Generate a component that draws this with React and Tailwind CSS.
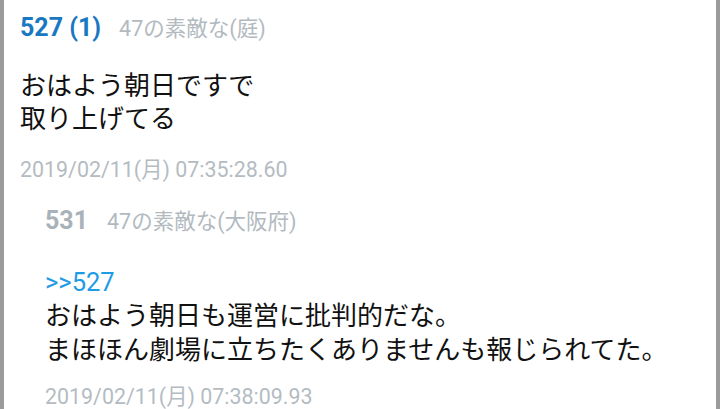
export default function App() {
  const font = { fontFamily: 'Roboto, "Noto Sans CJK JP", sans-serif' };
  return (
    <div className="w-[720px] h-[409px] overflow-hidden flex bg-white" style={font}>
      <div className="w-[4px] bg-[#9b9b9b] shrink-0" />
      <div className="flex-1 flex flex-col">
        {/* Post 1 */}
        <div className="pl-[16px] pt-[12px] pb-[9px]">
          <div className="flex items-baseline h-[32px] leading-[32px]">
            <span className="text-[25px] font-bold text-[#1a78c2]">527 (1)</span>
            <span className="ml-[18px] text-[21.5px] text-[#b2bac0]">47の素敵な(庭)</span>
          </div>
          <div className="mt-[26px] text-[26px] leading-[33px] text-[#111111]">
            <div>おはよう朝日ですで</div>
            <div>取り上げてる</div>
          </div>
          <div className="mt-[20px] text-[21.4px] leading-[28px] text-[#b4bcc2]">2019/02/11(月) 07:35:28.60</div>
        </div>
        <div className="h-[2px] bg-[#e6e6e6]" />
        {/* Post 2 */}
        <div className="pl-[41px] pt-[12px]">
          <div className="flex items-baseline h-[32px] leading-[32px]">
            <span className="text-[25px] font-bold text-[#a9b2b8]">531</span>
            <span className="ml-[19px] text-[21.5px] text-[#b2bac0]">47の素敵な(大阪府)</span>
          </div>
          <div className="mt-[28px] text-[25.5px] leading-[34px] text-[#1e9be6]">&gt;&gt;527</div>
          <div className="text-[26px] leading-[34px] text-[#111111]">
            <div>おはよう朝日も運営に批判的だな。</div>
            <div>まほほん劇場に立ちたくありませんも報じられてた。</div>
          </div>
          <div className="mt-[16px] text-[21.4px] leading-[28px] text-[#b4bcc2]">2019/02/11(月) 07:38:09.93</div>
        </div>
      </div>
      <div className="w-[4px] bg-[#9b9b9b] shrink-0" />
    </div>
  );
}
